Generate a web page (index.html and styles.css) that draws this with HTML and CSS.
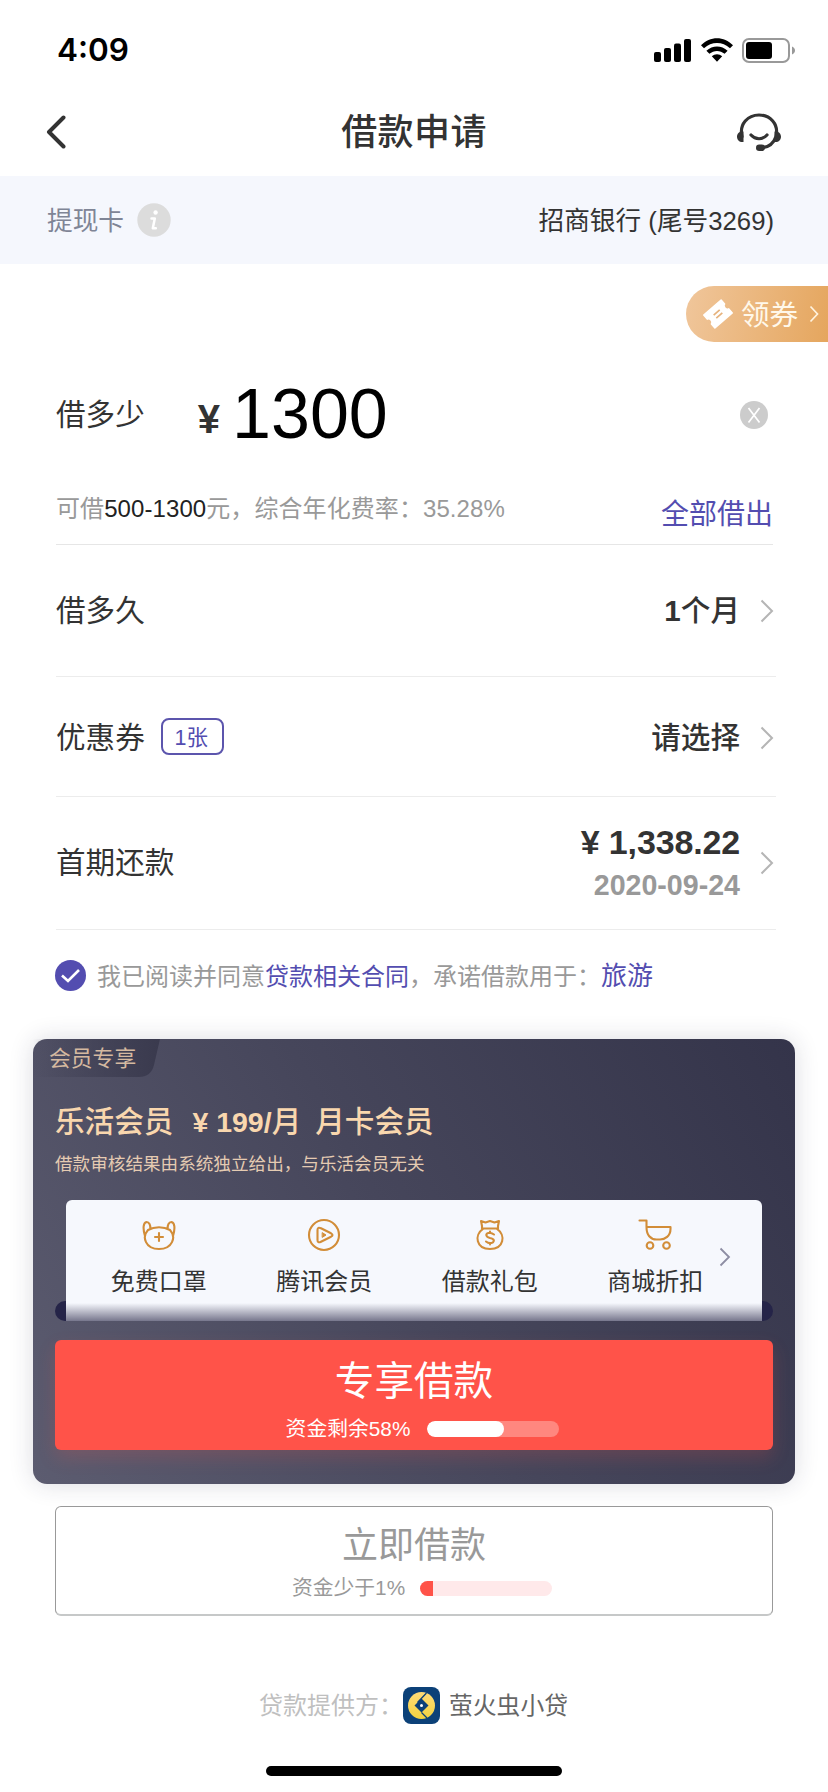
FILE: index.html
```html
<!DOCTYPE html>
<html lang="zh-CN">
<head>
<meta charset="utf-8">
<title>借款申请</title>
<link rel="stylesheet" href="styles.css">
</head>
<body>
<div class="page">
  <div class="status">
    <span class="clock">4:09</span>
    <div class="status-icons">
      <svg width="38" height="25" viewBox="0 0 38 25"><rect x="0" y="14" width="7" height="10" rx="2"/><rect x="10" y="10" width="7" height="14" rx="2"/><rect x="20" y="5.500" width="7" height="18.500" rx="2"/><rect x="30" y="1" width="7" height="23" rx="2"/></svg>
      <svg width="32" height="25" viewBox="0 0 32 25"><path d="M0 7.200C9-2.200 23-2.200 32 7.200L29 10.300C21.500 3.200 10.500 3.200 3 10.300ZM5.400 12.800C11.500 6.900 20.500 6.900 26.600 12.800L23.600 15.800C19.200 11.900 12.800 11.900 8.400 15.800ZM10.800 18.300C13.800 15.600 18.200 15.600 21.200 18.300L16 23.800Z"/></svg>
      <svg width="54" height="25" viewBox="0 0 54 25"><rect x="1" y="1" width="46" height="23" rx="6" fill="none" stroke="#999" stroke-width="2"/><rect x="4" y="4" width="26" height="17" rx="3"/><path d="M50 8.500c4 1.500 4 6.500 0 8z" fill="#999"/></svg>
    </div>
  </div>
  <header class="header">
    <svg class="back" width="20" height="34" viewBox="0 0 20 34"><path d="M17.500 2.500L3 17L17.500 31.500"/></svg>
    <h1 class="title">借款申请</h1>
    <svg class="service" width="46" height="40" viewBox="0 0 46 40"><path class="line" d="M6 24.500C3 12 12 3 23 3S43 12 40 24.500C37.500 32 32 35.500 25 36M15 23C19.500 28 26.500 28 31 23"/><path d="M7.500 19.500V30C3.500 30.500 1 28 1 24.700S3.500 19 7.500 19.500ZM38.500 19.500V30C42.500 30.500 45 28 45 24.700S42.500 19 38.500 19.500Z"/><rect x="20" y="32.500" width="9" height="6.500" rx="3.200"/></svg>
  </header>
  <section class="bank">
    <span class="bank-label">提现卡</span>
    <span class="info">
      <svg width="34" height="34" viewBox="0 0 34 34"><circle cx="17" cy="17" r="16.700" fill="#dcdcdc"/><circle cx="18.600" cy="9.500" r="2.200" fill="#fff"/><path d="M14.500 15.500H17.800L15.800 25.300H18.800" fill="none" stroke="#fff" stroke-width="2.500" stroke-linejoin="round" stroke-linecap="round"/></svg>
    </span>
    <span class="bank-name">招商银行 (尾号3269)</span>
  </section>

  <div class="coupon-tag">
    <svg width="32" height="32" viewBox="0 0 32 32"><g transform="rotate(-41 16 16)"><path d="M4.500 7.500H27.500V12.800C24.500 13.300 24.500 18.700 27.500 19.200V24.500H4.500V19.200C7.500 18.700 7.500 13.300 4.500 12.800Z" fill="#fff" stroke="#fff" stroke-width="1.500" stroke-linejoin="round"/><path d="M12 14H20M12 18H20" stroke="#e6b27c" stroke-width="1.700"/></g></svg>
    <span class="coupon-text">领券</span>
    <svg width="10" height="18" viewBox="0 0 10 18"><path d="M1.500 1.500L8.500 9L1.500 16.500" fill="none" stroke="#fff3df" stroke-width="1.700"/></svg>
  </div>

  <main class="form">
    <div class="amount">
      <span class="label">借多少</span>
      <span class="money"><span class="yen">¥</span><span class="digits">1300</span></span>
      <svg class="clear" width="28" height="28" viewBox="0 0 28 28"><circle cx="14" cy="14" r="14" fill="#ccc"/><path d="M8.500 7L19.500 21.500M19.500 7L8.500 21.500" stroke="#fff" stroke-width="1.700"/></svg>
    </div>
    <div class="range">
      <span class="range-text">可借<b>500-1300</b>元，综合年化费率：35.28%</span>
      <span class="all">全部借出</span>
    </div>
    <div class="row row-term">
      <span class="label">借多久</span>
      <span class="value"><b>1</b>个月</span>
      <svg class="arrow" width="14" height="24" viewBox="0 0 14 24"><path d="M1.500 1.500L12 12L1.500 22.500"/></svg>
    </div>
    <div class="row row-coupon">
      <span class="label">优惠券</span><span class="badge">1张</span>
      <span class="value">请选择</span>
      <svg class="arrow" width="14" height="24" viewBox="0 0 14 24"><path d="M1.500 1.500L12 12L1.500 22.500"/></svg>
    </div>
    <div class="row row-repay">
      <span class="label">首期还款</span>
      <span class="repay"><span class="repay-sum">¥ 1,338.22</span><span class="repay-date">2020-09-24</span></span>
      <svg class="arrow" width="14" height="24" viewBox="0 0 14 24"><path d="M1.500 1.500L12 12L1.500 22.500"/></svg>
    </div>
    <div class="agree">
      <svg width="31" height="31" viewBox="0 0 31 31"><circle cx="15.500" cy="15.500" r="15.500" fill="#534db0"/><path d="M7 15.500L13 21L24 10" fill="none" stroke="#fff" stroke-width="2.600"/></svg>
      <span class="agree-text">我已阅读并同意<span class="link">贷款相关合同</span>，承诺借款用于：<span class="link purpose">旅游</span></span>
    </div>
  </main>

  <section class="member">
    <div class="member-tag">
      <svg class="member-shape" width="128" height="38" viewBox="0 0 128 38"><defs><linearGradient id="tag" x1="0" x2="1"><stop offset="0" stop-color="#3a3a4e" stop-opacity="0"/><stop offset="1" stop-color="#3a3a4e"/></linearGradient></defs><path d="M0 0H127L121 26Q118 38 106 38H0Z" fill="url(#tag)"/></svg>
      <span class="member-tag-text">会员专享</span>
    </div>
    <div class="plan"><span>乐活会员</span><span class="plan-price"><b>¥ 199/</b>月</span><span>月卡会员</span></div>
    <p class="notice">借款审核结果由系统独立给出，与乐活会员无关</p>
    <div class="perk-slot">
      <div class="perks">
        <div class="perk">
          <svg width="34" height="34" viewBox="0 0 34 34"><path d="M6 12C-.500 19 3.500 31 17 31S34.500 19 28 12C21.500 8.300 12.500 8.300 6 12ZM3 18C.500 10 1.500 4.500 4.500 4C7.300 4 8.500 7 8.300 10.800M31 18C33.500 10 32.500 4.500 29.500 4C26.700 4 25.500 7 25.700 10.800M17 15V23M13 19H21"/></svg>
          <span>免费口罩</span>
        </div>
        <div class="perk">
          <svg width="34" height="34" viewBox="0 0 34 34"><circle cx="17" cy="17" r="15"/><path d="M10.500 12Q10.500 8.500 14 10.300L24 15.300Q27 17 24 18.700L14 23.700Q10.500 25.500 10.500 22Z"/><path d="M15.500 14.800L19 17L15.500 19.200Z" stroke-width="1" fill="#d28d38"/></svg>
          <span>腾讯会员</span>
        </div>
        <div class="perk">
          <svg width="34" height="34" viewBox="0 0 34 34"><path d="M9 10.500V8L8 3L12.500 4.500L17 3L21.500 4.500L26 3L25 8V10.500M9 10.500H25M10 10.800C1 17 3 31 17 31S33 17 24 10.800M21 16.500Q17 13.500 14 15.500C12 18 15 19.500 17 20C20 20.500 22 22 20 24.300Q16.500 26.300 13 23.500M17 13.500V15M17 25V26.500"/></svg>
          <span>借款礼包</span>
        </div>
        <div class="perk">
          <svg width="34" height="34" viewBox="0 0 34 34"><path d="M1.500 2.500H8.500V9H32.500V11C32.500 18 27 21.500 22 21.500H18.500C12.500 21.500 8.500 17 8.500 9"/><circle cx="12" cy="27.500" r="3.300"/><circle cx="28.500" cy="27.500" r="3.300"/></svg>
          <span>商城折扣</span>
        </div>
        <svg class="perk-arrow" width="12" height="20" viewBox="0 0 12 20"><path d="M1.500 1.500L10 10L1.500 18.500" fill="none" stroke="#8d8da3" stroke-width="1.800"/></svg>
      </div>
    </div>
    <div class="btn btn-main">
      <span class="btn-title">专享借款</span>
      <div class="btn-sub"><span>资金剩余58%</span><span class="bar"><span class="fill" style="width:58%"></span></span></div>
    </div>
  </section>

  <div class="btn btn-plain">
    <span class="btn-title">立即借款</span>
    <div class="btn-sub"><span>资金少于1%</span><span class="bar"><span class="fill" style="width:10%"></span></span></div>
  </div>

  <footer class="provider">
    <span class="provider-label">贷款提供方：</span>
    <svg width="37" height="37" viewBox="0 0 37 37"><defs><linearGradient id="coin" x2="0" y2="1"><stop offset="0" stop-color="#ffdc78"/><stop offset="1" stop-color="#f3d23f"/></linearGradient></defs><rect width="37" height="37" rx="8" fill="#0c4178"/><circle cx="18.500" cy="18.500" r="13.500" fill="url(#coin)"/><path d="M18.500 11.500L25.500 18.500L18.500 25.500L11.500 18.500Z" fill="#0c4178"/><path d="M23.500 6L14.500 15.500M18.500 25.500L24 31" stroke="#0c4178" stroke-width="1.300"/><circle cx="18.500" cy="18.500" r="1.500" fill="#fff"/></svg>
    <span class="provider-name">萤火虫小贷</span>
  </footer>
  <div class="home"></div>
</div>
</body>
</html>
```

FILE: styles.css
```css
* { box-sizing: border-box; }
body { margin: 0; background: #fff; }
svg { display: block; flex: none; }
.page {
  width: 828px; height: 1792px; overflow: hidden;
  display: flex; flex-direction: column;
  font-family: "Liberation Sans", "Noto Sans CJK SC", sans-serif;
  color: #333; white-space: nowrap;
}
.status { height: 88px; flex: none; display: flex; justify-content: space-between; padding: 31px 32px 0 57px; }
.clock { font: 600 31.5px/38px Inter, sans-serif; color: #000; }
.status-icons { display: flex; padding-top: 7px; gap: 9px; }
.header { height: 88px; flex: none; display: grid; grid-template-columns: 120px 1fr 120px; align-items: center; padding: 0 46px 0 46px; }
.back path { fill: none; stroke: #333; stroke-width: 4; stroke-linecap: round; stroke-linejoin: round; }
.title { margin: 2px 0 0; font-size: 36px; letter-spacing: .4px; line-height: 44px; font-weight: 500; text-align: center; }
.service { justify-self: end; fill: #333; }
.service .line { fill: none; stroke: #333; stroke-width: 3.2; stroke-linecap: round; }
.bank { height: 88px; flex: none; background: #f5f7fd; display: flex; align-items: center; padding: 2px 54px 0 47px; font-size: 25.7px; line-height: 32px; }
.bank-label { color: #7f8596; }
.info { margin-left: 13px; margin-top: -2px; }
.bank-name { margin-left: auto; }
.coupon-tag { height: 56px; width: 142px; flex: none; align-self: flex-end; margin-top: 22px; border-radius: 28px 0 0 28px; background: linear-gradient(100deg, #f0c69b, #e5a65e); display: flex; align-items: center; padding-left: 16px; }
.coupon-text { font-size: 28.6px; line-height: 34px; color: #fff8ea; margin: 2px 11px 0 7px; }
.form { padding: 0 52px 0 56px; flex: none; }
.label { font-size: 29.6px; line-height: 40px; }
.amount { height: 146px; display: flex; align-items: center; padding-right: 8px; }
.money { margin: 8px 0 0 53px; display: flex; align-items: baseline; line-height: 80px; }
.yen { font-size: 40px; font-weight: 700; transform: translateY(-5px); }
.digits { font-size: 70px; color: #000; margin-left: 12px; }
.clear { margin: 0 0 1px auto; }
.range { height: 57px; margin-right: 3px; border-bottom: 1px solid #e6e6e6; display: flex; justify-content: space-between; padding-bottom: 11px; align-items: center; color: #999; font-size: 24px; line-height: 32px; }
.range-text { margin-top: -4px; letter-spacing: .08px; }
.range b { font-weight: 400; color: #222; }
.all { font-size: 28px; color: #534db0; padding-top: 9px; line-height: 34px; }
.row { display: flex; align-items: center; border-bottom: 1px solid #ececec; padding-right: 2px; }
.row-term { height: 132px; }
.row-coupon { height: 120px; padding-top: 2px; }
.row-repay { height: 133px; }
.value { margin-left: auto; font-size: 29.6px; font-weight: 500; line-height: 40px; }
.arrow { margin-left: 20px; }
.arrow path { fill: none; stroke: #b5b5b5; stroke-width: 2; }
.badge { margin-left: 16px; margin-top: -3px; width: 63px; height: 37px; border: 2px solid #5c55ad; border-radius: 8px; color: #534db0; font-size: 21.5px; line-height: 36px; text-align: center; padding-right: 2px; }
.repay { margin-left: auto; display: flex; flex-direction: column; align-items: flex-end; font-weight: 700; }
.repay-sum { font-size: 34px; line-height: 44px; letter-spacing: -.15px; }
.repay-date { font-size: 28.6px; line-height: 42px; color: #999; }
.agree { height: 94px; display: flex; align-items: center; margin-left: -1px; color: #999; padding-bottom: 3px; }
.agree-text { font-size: 24px; line-height: 32px; margin-left: 11px; padding-top: 2px; }
.link { color: #534db0; }
.purpose { font-size: 26px; }
.member { margin: 15px 33px 0; height: 445px; flex: none; border-radius: 14px; background: linear-gradient(60deg, #5c5c70, #46465b 50%, #34344a); box-shadow: 0 0 24px rgba(40, 40, 70, .16); padding: 0 22px; }
.member-tag { position: relative; height: 38px; margin-left: -22px; width: 128px; }
.member-shape { position: absolute; top: 0; left: 0; }
.member-tag-text { position: relative; display: block; padding-left: 16px; font-size: 21.8px; line-height: 40px; color: #d5b9a0; }
.plan { display: flex; height: 40px; margin-top: 25px; font-size: 29.6px; line-height: 40px; font-weight: 500; color: #f9d7ae; }
.plan-price { margin: 0 14px 0 19px; }
.plan-price b { font-size: 28.5px; }
.notice { margin: 8px 0 0; font-size: 17.6px; line-height: 28px; color: #e5cbb2; }
.perk-slot { position: relative; margin-top: 22px; height: 121px; padding: 0 11px; }
.perk-slot::before { content: ""; position: absolute; inset: 101px 0 0; background: #252448; border-radius: 10px; }
.perks { position: relative; height: 121px; border-radius: 6px 6px 0 0; background: linear-gradient(#f6f8fd 0 102px, #f6f8fd 103px, #77778d 121px); padding: 18px 0 0 10px; display: grid; grid-template-columns: repeat(4, 165.5px); align-items: start; }
.perk { display: flex; flex-direction: column; align-items: center; font-size: 24px; line-height: 32px; gap: 14px; }
.perk svg { fill: none; stroke: #d28d38; stroke-width: 2.1; stroke-linejoin: round; stroke-linecap: round; }
.perk-arrow { position: absolute; right: 31px; top: 47px; }
.btn { height: 110px; border-radius: 6px; display: flex; flex-direction: column; align-items: center; flex: none; }
.btn-main { margin-top: 19px; background: #ff5349; color: #fff; box-shadow: 0 8px 18px rgba(255, 83, 73, .18); padding-top: 17px; }
.btn-title { line-height: 48px; font-size: 39.6px; }
.btn-sub { display: flex; align-items: center; font-size: 20.8px; line-height: 28px; margin-top: 10px; padding-left: 17px; gap: 17px; }
.bar { width: 132px; height: 16px; border-radius: 8px; overflow: hidden; background: #ff877f; }
.fill { display: block; height: 100%; border-radius: 8px; background: #fff; }
.btn-plain { margin: 22px 55px 0; border: 1px solid #999; border-bottom: 2px solid #c6c8c8; color: #999; padding-top: 15px; }
.btn-plain .btn-title { font-size: 36px; }
.btn-plain .btn-sub { margin-top: 4px; padding-left: 16px; gap: 15px; }
.btn-plain .bar { height: 15px; background: #ffe9ea; }
.btn-plain .fill { background: #ff5349; border-radius: 0; }
.provider { height: 38px; margin-top: 70px; flex: none; display: flex; align-items: center; padding-left: 259px; font-size: 24px; line-height: 32px; }
.provider-label, .provider-name { padding-top: 2px; }
.provider-label { color: #bfbfbf; }
.provider-name { color: #666; margin-left: 9px; font-size: 23.8px; }
.home { width: 296px; height: 10px; border-radius: 5px; background: #000; margin: 42px 0 0 266px; flex: none; }
```
